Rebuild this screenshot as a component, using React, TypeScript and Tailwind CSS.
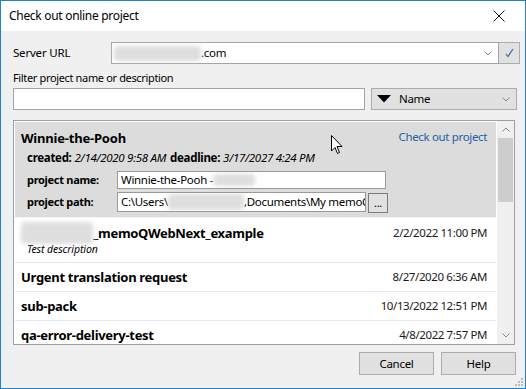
import React from "react";

const Chevron = ({ up = false }: { up?: boolean }) => (
  <svg width="8" height="5" viewBox="0 0 8 5" className={up ? "rotate-180" : ""}>
    <path d="M0.5 0.5 L4 4 L7.5 0.5" fill="none" stroke="#8a8a8a" strokeWidth="1" />
  </svg>
);

const Blur = ({ w, h }: { w: number; h: number }) => (
  <div
    className="bg-[#dedede] blur-[2px] rounded-sm shrink-0"
    style={{ width: w, height: h }}
  />
);

function ListItem({
  title,
  date,
  desc,
  blurLead,
}: {
  title: string;
  date: string;
  desc?: string;
  blurLead?: boolean;
}) {
  return (
    <div
      className={
        "border-b border-[#e6e6f2] pl-[6px] pr-[9px] " +
        (desc ? "h-[45px] pt-[4px]" : "h-[29px] flex items-center")
      }
    >
      <div className="flex w-full items-center justify-between">
        <div className="flex items-center">
          {blurLead && <Blur w={72} h={22} />}
          <span className="font-bold text-[13px] tracking-[-0.3px] leading-[22px]">{title}</span>
        </div>
        <span className="text-[11.5px] tracking-[-0.4px] text-[#1a1a1a] leading-[16px]">{date}</span>
      </div>
      {desc && (
        <div className="pl-[6px] italic text-[10.5px] tracking-[-0.1px] leading-[14px] -mt-[2px]">{desc}</div>
      )}
    </div>
  );
}

export default function App() {
  return (
    <div className="relative w-[526px] h-[389px] border border-[#1883d7] bg-[#f0f0f0] flex flex-col overflow-hidden font-['Segoe_UI','Noto_Sans',sans-serif] text-[11.5px] tracking-[-0.3px] text-black">
      {/* Title bar */}
      <div className="h-[30px] bg-white flex items-center justify-between pl-[8px] pr-[20px] shrink-0">
        <span className="text-[12px] tracking-[-0.3px]">Check out online project</span>
        <svg width="12" height="12" viewBox="0 0 12 12">
          <path d="M0.5 0.5 L11.5 11.5 M11.5 0.5 L0.5 11.5" stroke="#111" strokeWidth="1" />
        </svg>
      </div>

      {/* Body */}
      <div className="flex-1 pl-[12px] pt-[11px]">
        {/* Server URL */}
        <div className="flex h-[22px] items-center">
          <span className="w-[98px] leading-[16px] tracking-[-0.2px]">Server URL</span>
          <div className="w-[388px] h-full border border-[#a5a5a5] bg-white flex items-center pl-[2px] pr-[6px]">
            <Blur w={87} h={15} />
            <span className="leading-[16px]">.com</span>
            <div className="flex-1" />
            <Chevron />
          </div>
          <div className="w-[21px] h-full bg-[#e1e1e1] border border-l-0 border-[#adadad] flex items-center justify-center">
            <svg width="9" height="10" viewBox="0 0 9 10">
              <path d="M1 6 L3 8.5 L8 1" fill="none" stroke="#3a6fb8" strokeWidth="1.3" />
              <path d="M1 6 L3 8.5" fill="none" stroke="#c98a3a" strokeWidth="0.8" />
            </svg>
          </div>
        </div>

        {/* Filter */}
        <div className="mt-[6px] leading-[16px] text-[11px] tracking-[-0.35px]">Filter project name or description</div>
        <div className="mt-[2px] flex h-[22px] gap-[6px]">
          <div className="w-[352px] h-full border border-[#a5a5a5] bg-white" />
          <div className="w-[146px] h-full border border-[#adadad] bg-[#e1e1e1] flex items-center pl-[5px] pr-[6px]">
            <svg width="14" height="8" viewBox="0 0 14 8">
              <path d="M0 0 L14 0 L7 7.5 Z" fill="#000" />
            </svg>
            <span className="ml-[8px] leading-[16px]">Name</span>
            <div className="flex-1" />
            <Chevron />
          </div>
        </div>

        {/* List */}
        <div className="mt-[10px] w-[502px] h-[225px] border border-[#a0a0a0] bg-white flex">
          <div className="w-[483px] px-[1px] pt-[1px] overflow-hidden">
            {/* Selected item */}
            <div className="h-[96px] bg-[#dcdcdc] border-b border-[#f4f4f4] pl-[6px] pr-[9px] pt-[6px]">
              <div className="flex items-center justify-between h-[20px]">
                <span className="font-bold text-[13px] tracking-[-0.2px] leading-[20px]">Winnie-the-Pooh</span>
                <span className="text-[#255ea5] tracking-[-0.35px] leading-[16px] -mt-[2px]">Check out project</span>
              </div>
              <div className="mt-[2px] ml-[6px] leading-[16px] flex gap-[3px]">
                <span className="font-bold">created:</span>
                <span className="italic">2/14/2020 9:58 AM</span>
                <span className="font-bold ml-[1px]">deadline:</span>
                <span className="italic">3/17/2027 4:24 PM</span>
              </div>
              <div className="mt-[5px] ml-[6px] flex items-center">
                <span className="w-[90px] font-bold text-[11px] leading-[16px]">project name:</span>
                <div className="w-[269px] h-[18px] border border-[#9a9a9a] bg-white flex items-center pl-[3px] overflow-hidden">
                  <span className="leading-[14px] whitespace-nowrap">Winnie-the-Pooh -</span>
                  <Blur w={42} h={12} />
                </div>
              </div>
              <div className="mt-[3px] ml-[6px] flex items-start">
                <span className="w-[90px] font-bold text-[11px] leading-[20px]">project path:</span>
                <div className="w-[249px] h-[20px] border border-[#9a9a9a] bg-white flex items-center pl-[3px] overflow-hidden whitespace-nowrap">
                  <span className="leading-[14px] shrink-0">C:\Users\</span>
                  <Blur w={76} h={16} />
                  <span className="leading-[14px] flex-1 min-w-0 overflow-hidden">,Documents\My memoQ p</span>
                </div>
                <div className="ml-[2px] mt-[1px] w-[20px] h-[20px] border border-[#7a7a7a] bg-[#e1e1e1] flex items-center justify-center text-[11px] leading-[12px]">
                  ...
                </div>
              </div>
            </div>
            <ListItem title="_memoQWebNext_example" date="2/2/2022 11:00 PM" desc="Test description" blurLead />
            <ListItem title="Urgent translation request" date="8/27/2020 6:36 AM" />
            <ListItem title="sub-pack" date="10/13/2022 12:51 PM" />
            <ListItem title="qa-error-delivery-test" date="4/8/2022 7:57 PM" />
          </div>
          {/* Scrollbar */}
          <div className="w-[17px] bg-[#f0f0f0] flex flex-col">
            <div className="h-[17px] flex items-center justify-center">
              <Chevron up />
            </div>
            <div className="mx-[1px] h-[64px] bg-[#cdcdcd]" />
            <div className="flex-1" />
            <div className="h-[17px] flex items-center justify-center">
              <Chevron />
            </div>
          </div>
        </div>

        {/* Buttons */}
        <div className="mt-[7px] w-[503px] flex justify-end gap-[7px]">
          <div className="w-[75px] h-[23px] border border-[#adadad] bg-[#e1e1e1] flex items-center justify-center leading-[16px]">
            Cancel
          </div>
          <div className="w-[75px] h-[23px] border border-[#adadad] bg-[#e1e1e1] flex items-center justify-center leading-[16px]">
            Help
          </div>
        </div>
      </div>

      {/* Resize grip */}
      <svg className="absolute right-[2px] bottom-[2px]" width="8" height="8" viewBox="0 0 8 8">
        <rect x="6" y="0" width="2" height="2" fill="#bcbcbc" />
        <rect x="3" y="3" width="2" height="2" fill="#bcbcbc" />
        <rect x="6" y="3" width="2" height="2" fill="#bcbcbc" />
        <rect x="0" y="6" width="2" height="2" fill="#bcbcbc" />
        <rect x="3" y="6" width="2" height="2" fill="#bcbcbc" />
        <rect x="6" y="6" width="2" height="2" fill="#bcbcbc" />
      </svg>

      {/* Mouse cursor */}
      <svg className="absolute left-[330px] top-[134px]" width="13" height="20" viewBox="0 0 13 20">
        <path
          d="M0.5 0.5 L0.5 16 L4 12.5 L6.5 18.5 L8.5 17.5 L6 11.5 L11 11.5 Z"
          fill="#fff"
          stroke="#000"
          strokeWidth="1"
          strokeLinejoin="miter"
        />
      </svg>
    </div>
  );
}
